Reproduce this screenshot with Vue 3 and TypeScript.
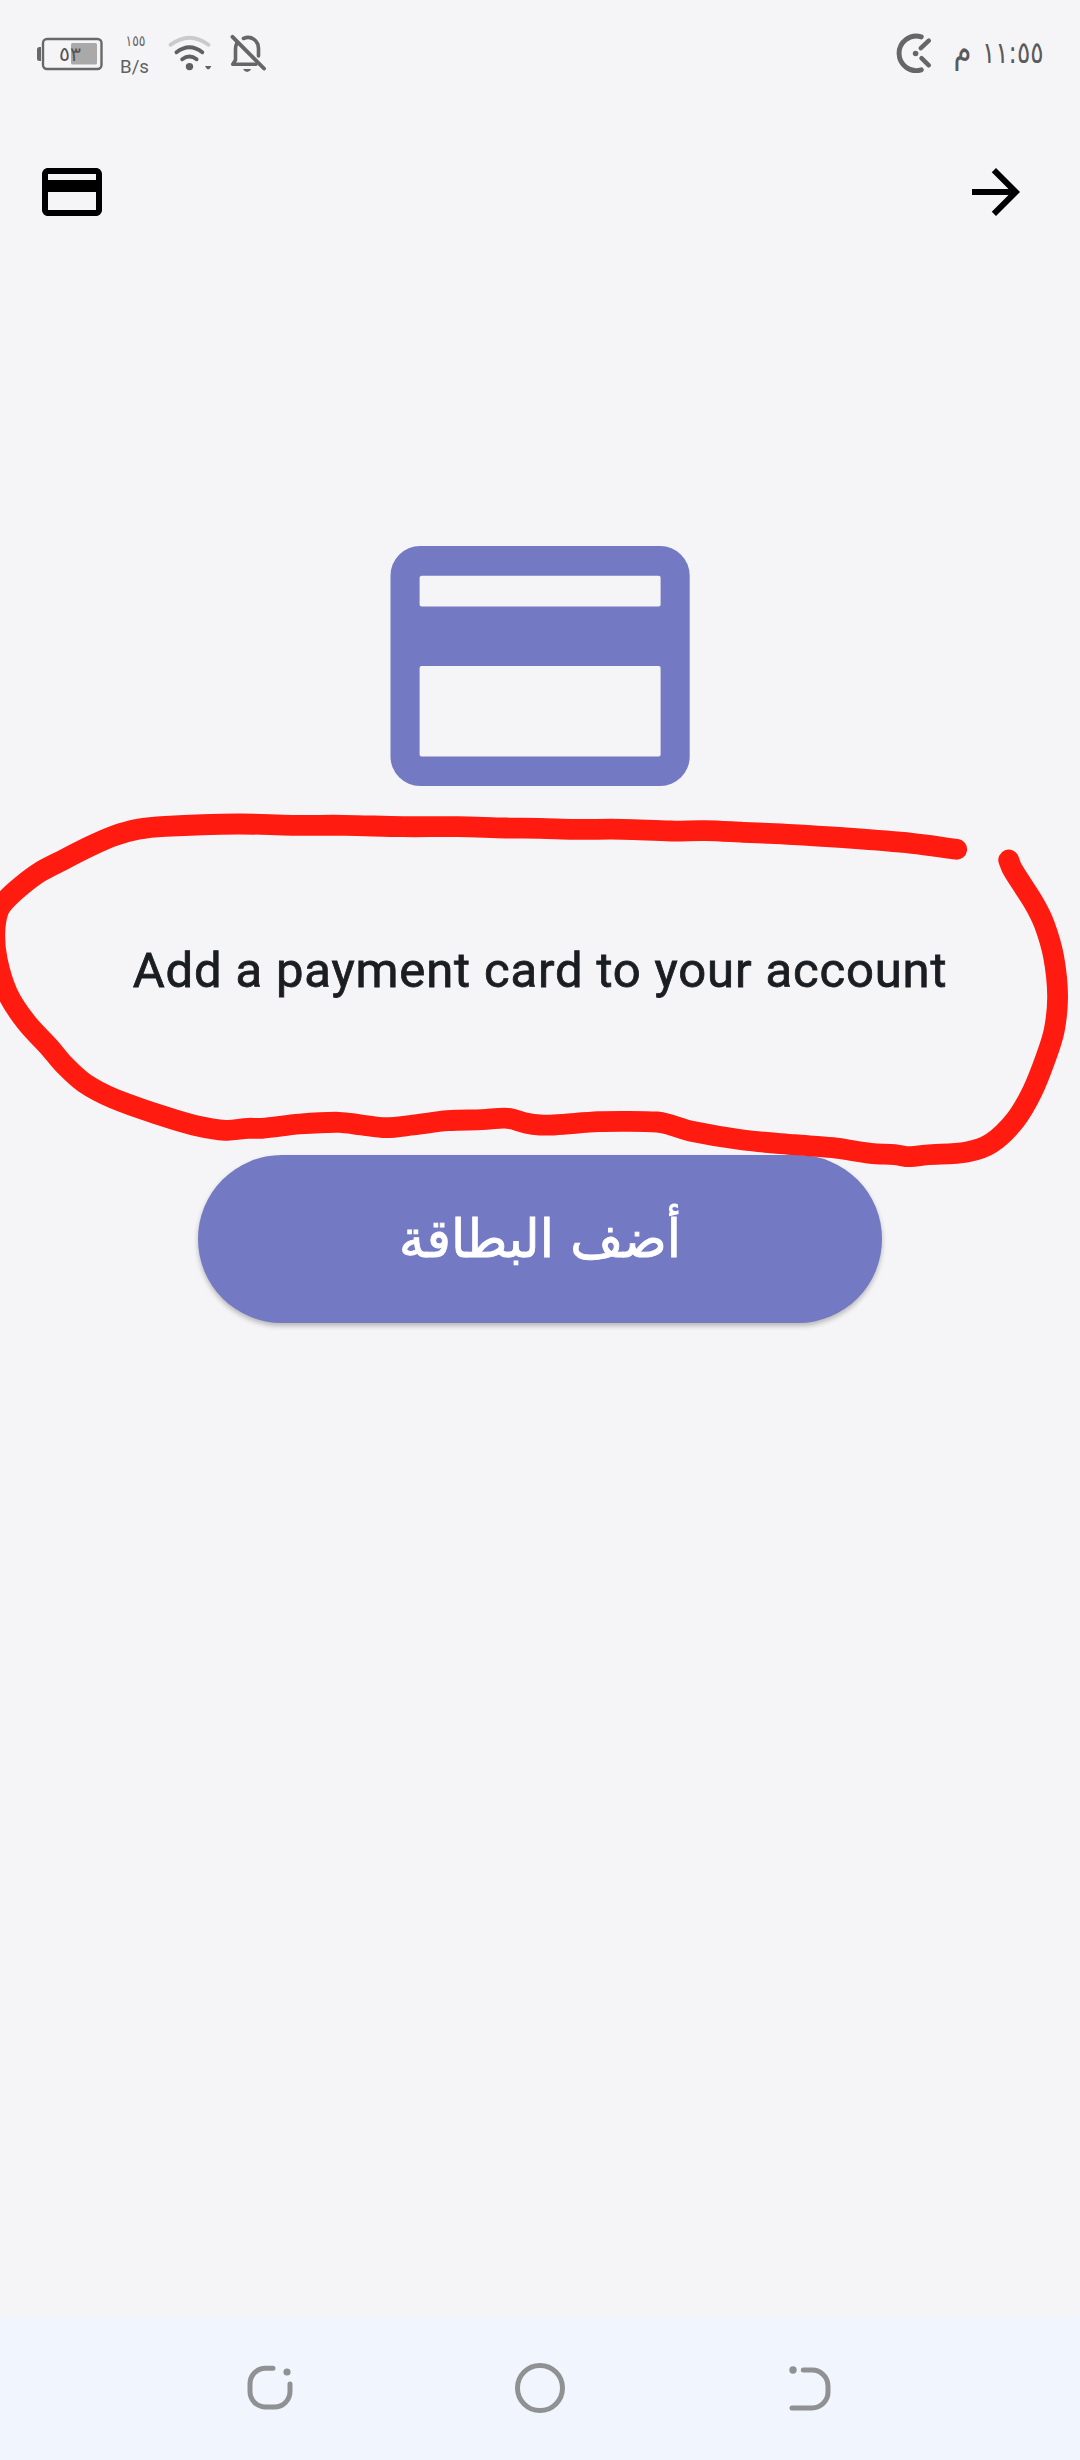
<script setup lang="ts">
type Point = [number, number]

// Centre line of the freehand marker stroke, in page coordinates
const stroke: Point[] = [
  [956.7, 849.3], [911.9, 843.3], [843, 837.7], [788, 834.3], [743.2, 832.3], [705.3, 830.7],
  [670.9, 831], [622.6, 829.3], [574.4, 829.3], [540, 828.3], [506.2, 828], [458, 826.7],
  [402.9, 826.7], [344.4, 825.3], [292.7, 825.3], [237.6, 824], [165.3, 826.3], [137.7, 829.3],
  [113.6, 836], [91.3, 845.7], [58.5, 862.3], [39.6, 872.3], [22.4, 885], [6.9, 899],
  [-1.7, 911], [-5.2, 933.3], [-2.8, 960], [7.6, 993.3], [25.8, 1021.7], [49.9, 1048],
  [63.7, 1064.3], [84.4, 1083], [113.6, 1098.5], [161.9, 1115.7], [194.6, 1125.3], [225.6, 1130.3],
  [248, 1128.3], [261.7, 1128.3], [299.6, 1124], [339.2, 1122.3], [361.6, 1125], [385.7, 1127.7],
  [413.2, 1125], [447.7, 1120.7], [482.1, 1119.7], [507.9, 1118.3], [526.9, 1123.3], [540, 1125],
  [553.8, 1125], [598.5, 1121.7], [626.1, 1121.3], [657.1, 1122], [667.4, 1124], [691.5, 1131.3],
  [743.2, 1140], [794.8, 1144.7], [832.7, 1147.7], [870.6, 1153.3], [894.7, 1154.7], [910.2, 1156.7],
  [925.7, 1155], [967, 1152], [991.1, 1143.3], [1015.2, 1120.3], [1032.4, 1091.3], [1046.2, 1056.7],
  [1054.3, 1030], [1057.6, 996], [1053.6, 956.7], [1044.5, 924.7], [1034.1, 903.3], [1018.7, 879.3],
  [1011.8, 868], [1008.7, 860],
]

function smooth(points: Point[]): string {
  let d = `M${points[0][0]} ${points[0][1]}`
  for (let i = 0; i < points.length - 1; i++) {
    const a = points[Math.max(i - 1, 0)]
    const b = points[i]
    const c = points[i + 1]
    const e = points[Math.min(i + 2, points.length - 1)]
    const k = Math.hypot(c[0] - b[0], c[1] - b[1]) / 3
    const t1 = Math.hypot(c[0] - a[0], c[1] - a[1]) || 1
    const t2 = Math.hypot(e[0] - b[0], e[1] - b[1]) || 1
    d += `C${b[0] + ((c[0] - a[0]) / t1) * k} ${b[1] + ((c[1] - a[1]) / t1) * k} ` +
      `${c[0] - ((e[0] - b[0]) / t2) * k} ${c[1] - ((e[1] - b[1]) / t2) * k} ${c[0]} ${c[1]}`
  }
  return d
}

const markerPath = smooth(stroke)
const title = 'Add a payment card to your account'
</script>

<template>
  <div class="screen">
    <div class="status">
      <div class="status-left">
        <svg class="battery" width="70" height="40" viewBox="36 34 70 40">
          <path d="M41 47h-1.5a2.5 2.5 0 0 0-2.5 2.5v9a2.5 2.5 0 0 0 2.5 2.5H41z" fill="#686868" />
          <rect x="43" y="39" width="58.5" height="30" rx="4" fill="none" stroke="#686868" stroke-width="2.4" />
          <rect x="71" y="43" width="26" height="21.5" rx="1.5" fill="#a9a9a9" />
          <text x="59" y="61" font-size="20" textLength="22" lengthAdjust="spacingAndGlyphs" fill="#555">٥٣</text>
        </svg>
        <svg class="speed" width="32" height="50" viewBox="119 30 32 50">
          <text x="125.5" y="45.8" font-size="15" textLength="20" lengthAdjust="spacingAndGlyphs" fill="#666">١٥٥</text>
          <text x="120" y="72.8" class="latin" font-size="19" textLength="29" lengthAdjust="spacingAndGlyphs" fill="#606060">B/s</text>
        </svg>
        <svg class="wifi" width="46" height="40" viewBox="167 34 46 40">
          <g fill="none" stroke-width="3.9" stroke-linecap="round">
            <path d="M170.6 44.8Q189.5 30.5 208.4 44.8" stroke="#cacaca" />
            <path d="M176.5 52.3Q189.5 42.2 202.3 52.3" stroke="#606060" />
            <path d="M182.2 59.3Q189.5 53.8 196.6 59.3" stroke="#606060" />
          </g>
          <circle cx="189.5" cy="66.6" r="3.7" fill="#606060" />
          <path d="M205 66h6.4l-1.8 2.7q-1.4 1.3-2.8 0z" fill="#606060" />
        </svg>
        <svg class="bell" width="38" height="40" viewBox="229 34 38 40">
          <g fill="none" stroke="#666" stroke-width="3.6" stroke-linecap="round">
            <path d="M232.5 36.8L264 68.5" stroke-width="3.9" />
            <path d="M243.5 38.5C251.5 35 258.5 41 258.5 48.5V56" />
            <path d="M236.7 43.5Q235.5 46 235.5 49.5V60L232.8 64.3H256" stroke-linejoin="round" />
          </g>
          <path d="M243 69h8.2q-1.5 3-4.1 3t-4.1-3z" fill="#666" />
        </svg>
      </div>
      <div class="status-right">
        <svg width="40" height="44" viewBox="894 31 40 44">
          <g fill="none" stroke="#666" stroke-width="4.9" stroke-linecap="round">
            <path d="M921.3 36.9A17.2 17.2 0 1 0 921.3 69.8" />
            <path d="M920.8 48.2L928.8 40.7M921.5 58.2L928.8 65.3" stroke-width="4.5" />
          </g>
          <circle cx="915.6" cy="53.5" r="2.8" fill="#666" />
        </svg>
        <svg class="time" width="112" height="70" viewBox="943 20 112 70">
          <text x="953.5" y="61.5" font-size="37" textLength="18" lengthAdjust="spacingAndGlyphs" fill="#5a5a5a">م</text>
          <text x="982" y="62.5" font-size="30" textLength="61.5" lengthAdjust="spacingAndGlyphs" fill="#5a5a5a">١١:٥٥</text>
        </svg>
      </div>
    </div>

    <header class="bar">
      <svg width="72" height="72" viewBox="0 0 24 24">
        <path d="M20 4H4c-1.11 0-1.99.89-1.99 2L2 18c0 1.11.89 2 2 2h16c1.11 0 2-.89 2-2V6c0-1.11-.89-2-2-2zm0 14H4v-6h16v6zm0-10H4V6h16v2z" />
      </svg>
      <svg width="72" height="72" viewBox="0 0 24 24">
        <path d="M12 4l-1.41 1.41L16.17 11H4v2h12.17l-5.58 5.59L12 20l8-8z" />
      </svg>
    </header>

    <main class="content">
      <svg class="card" width="300" height="240" viewBox="390 546 300 240">
        <rect x="390.5" y="546" width="299.2" height="240" rx="29.5" fill="#7379c2" />
        <rect x="419.6" y="575.7" width="241" height="30.8" rx="2" fill="#f5f5f8" />
        <rect x="419.6" y="666" width="241" height="90.5" rx="2" fill="#f5f5f8" />
      </svg>
      <h1 class="title">{{ title }}</h1>
      <button class="add" type="button" aria-label="أضف البطاقة">
        <svg width="400" height="150" viewBox="340 1164 400 150">
          <text class="label" x="399" y="1257" font-size="53" textLength="282" lengthAdjust="spacingAndGlyphs">أضف البطاقة</text>
        </svg>
      </button>
    </main>

    <nav class="nav">
      <svg width="60" height="60" viewBox="240 2358 60 60">
        <path d="M273 2368.3H265.5A15.5 15.5 0 0 0 250 2383.8V2391.5A15.5 15.5 0 0 0 265.5 2407H274.5A15.5 15.5 0 0 0 290 2391.5V2384" />
        <circle cx="287" cy="2372" r="3.6" />
      </svg>
      <svg width="60" height="60" viewBox="510 2358 60 60">
        <path d="M562.5 2388a22.5 22.5 0 1 1-45 0a22.5 22.5 0 1 1 45 0z" />
      </svg>
      <svg width="60" height="60" viewBox="780 2358 60 60">
        <path d="M803.3 2370H812A16 16 0 0 1 828 2386V2392A16 16 0 0 1 812 2408H792" />
        <circle cx="793" cy="2370" r="3.7" />
      </svg>
    </nav>

    <svg class="marker" width="1080" height="2460" viewBox="0 0 1080 2460">
      <path :d="markerPath" />
    </svg>
  </div>
</template>

<style>
body {
  margin: 0;
  background: #f5f5f8;
}
</style>

<style scoped>
.screen {
  position: relative;
  display: flex;
  flex-direction: column;
  box-sizing: border-box;
  width: 1080px;
  height: 2460px;
  overflow: hidden;
  background: #f5f5f8;
  font-family: "DejaVu Sans", sans-serif;
}
svg {
  display: block;
  flex: none;
}
.status {
  display: flex;
  align-items: center;
  justify-content: space-between;
  height: 108px;
  padding: 0 25px 0 36px;
  box-sizing: border-box;
}
.status-left,
.status-right {
  display: flex;
  align-items: center;
}
.speed {
  margin: 2px 16px 0 13px;
}
.bell {
  margin-left: 16px;
}
.status-right {
  gap: 9px;
  margin-top: -2px;
}
.status-right .time {
  margin-top: 4px;
}
.latin {
  font-family: Roboto, sans-serif;
}
.bar {
  display: flex;
  align-items: center;
  justify-content: space-between;
  height: 168px;
  padding: 0 48px 0 36px;
  box-sizing: border-box;
}
.content {
  flex: 1;
  display: flex;
  flex-direction: column;
  align-items: center;
}
.card {
  margin-top: 270px;
}
.title {
  margin: 150px 0 0;
  height: 70px;
  line-height: 70px;
  font-family: Roboto, sans-serif;
  font-size: 49px;
  font-weight: 400;
  letter-spacing: 0.85px;
  color: #1a1d21;
  -webkit-text-stroke: 0.8px #1a1d21;
  white-space: nowrap;
}
.add {
  display: flex;
  align-items: center;
  justify-content: center;
  width: 684px;
  height: 168px;
  margin-top: 149px;
  padding: 0;
  border: 0;
  border-radius: 84px;
  background: #7379c2;
  box-shadow: 0 3px 5px rgba(0, 0, 0, 0.25);
  font-family: inherit;
}
.label {
  fill: #fff;
  stroke: #fff;
  stroke-width: 0.9px;
}
.nav {
  display: flex;
  align-items: center;
  justify-content: space-between;
  height: 143px;
  padding: 0 240px 1px;
  box-sizing: border-box;
  background: #f1f5fd;
}
.nav path {
  fill: none;
  stroke: #909193;
  stroke-width: 5;
  stroke-linecap: round;
}
.nav circle {
  fill: #909193;
}
.marker {
  position: absolute;
  inset: 0;
  pointer-events: none;
}
.marker path {
  fill: none;
  stroke: #ff1b0f;
  stroke-width: 20.8px;
  stroke-linecap: round;
  stroke-linejoin: round;
}
</style>
